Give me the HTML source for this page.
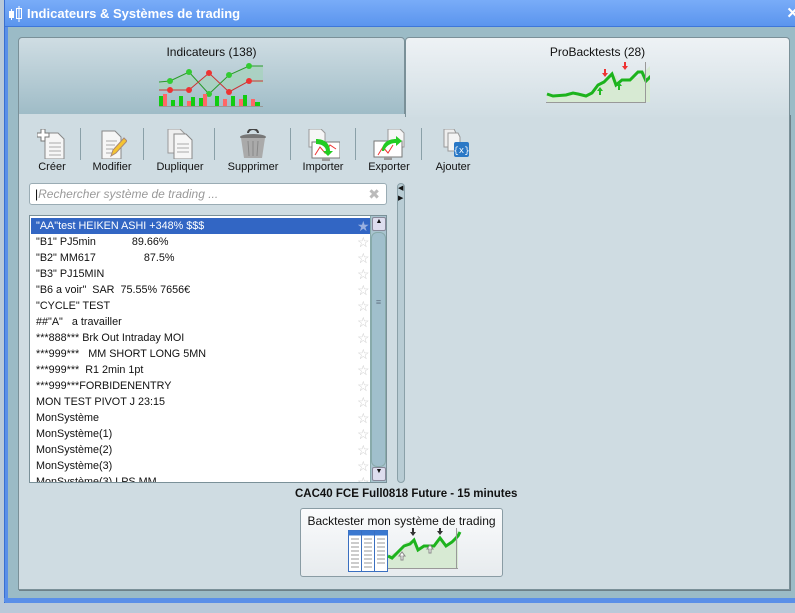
<!DOCTYPE html>
<html><head><meta charset="utf-8"><style>
*{margin:0;padding:0;box-sizing:border-box}
body{width:795px;height:613px;background:#b9c9d9;font-family:"Liberation Sans",sans-serif;position:relative;overflow:hidden;font-size:12px;color:#111}
.abs{position:absolute}
#win{left:4px;top:0;width:795px;height:603px;background:#5a8fe8;border-left:1px solid #3a6fd0}
#title{left:5px;top:0;width:790px;height:27px;background:linear-gradient(#79acf8,#5b95ee);border-bottom:1px solid #3f77d8}
#title span{position:absolute;left:22px;top:6px;color:#fff;font-weight:bold;font-size:13px}
#content{left:8px;top:27px;width:787px;height:571px;background:#9bbbc6}
#bline{left:4px;top:598px;width:791px;height:4px;background:#5a8fe8}
.tab{top:37px;height:78px;border:1px solid #7a9098;border-radius:4px 4px 0 0;text-align:center}
.tab .t{margin-top:7px;font-size:12px}
#panel{left:18px;top:114px;width:772px;height:476px;background:#cfdce2;border:1px solid #7a9098;border-top:none;box-shadow:1px 1px 0 #6d8088}
.tb{top:129px;text-align:center;font-size:11px;width:66px}
.tb .l{position:absolute;top:32px;width:100%;left:0}
.sep{top:128px;width:1px;height:32px;background:#8aa0a8}
#search{left:29px;top:183px;width:358px;height:22px;background:#fff;border:1px solid #9aacb4;border-radius:3px;color:#999;font-style:italic;padding:3px 0 0 5px;font-size:12px}
#list{left:29px;top:215px;width:358px;height:268px;background:#fff;border:1px solid #7a9098;overflow:hidden}
.r{position:absolute;left:1px;width:340px;height:16px;padding:2px 0 0 5px;white-space:pre;font-size:10.8px}
.st{position:absolute;left:326px;top:1px;color:#ccc;font-size:14px;line-height:14px}
#sb{left:370px;top:216px;width:16px;height:266px;background:#a9c4cf;border-left:1px solid #8aa}
</style></head><body>
<div id="win" class="abs"></div>
<div id="title" class="abs">
<svg class="abs" style="left:3px;top:6px" width="16" height="16"><rect x="1" y="5" width="5" height="7" fill="#fff"/><line x1="3.5" y1="3" x2="3.5" y2="14" stroke="#fff"/><rect x="8.5" y="2.5" width="5" height="10" fill="none" stroke="#fff"/><line x1="11" y1="0" x2="11" y2="16" stroke="#fff"/></svg>
<span>Indicateurs &amp; Systèmes de trading</span>
<div class="abs" style="right:-4px;top:4px;color:#fff;font-weight:bold;font-size:15px">✕</div></div>
<div id="content" class="abs"></div>
<div id="bline" class="abs"></div>
<div class="tab abs" style="left:18px;width:387px;background:linear-gradient(#cfdde3,#9fbcc7)"><div class="t">Indicateurs (138)</div>
<svg class="abs" style="left:140px;top:25px" width="105" height="45"><polygon points="0,44 0,19 11,18 30,9 50,31 70,12 90,3 104,3 104,21 90,18 70,29 50,10 30,27 11,27 0,27" fill="#a8d2be" opacity=".8"/><polyline points="0,19 11,18 30,9 50,31 70,12 90,3 104,3" fill="none" stroke="#2a9a2a"/><polyline points="0,27 11,27 30,27 50,10 70,29 90,18 104,18" fill="none" stroke="#c33"/><g fill="#3c3"><circle cx="11" cy="18" r="3"/><circle cx="30" cy="9" r="3"/><circle cx="50" cy="31" r="3"/><circle cx="70" cy="12" r="3"/><circle cx="90" cy="3" r="3"/></g><g fill="#e33"><circle cx="11" cy="27" r="3"/><circle cx="30" cy="27" r="3"/><circle cx="50" cy="10" r="3"/><circle cx="70" cy="29" r="3"/><circle cx="90" cy="18" r="3"/></g><g fill="#1c1"><rect x="0" y="33" width="4" height="10"/><rect x="12" y="37" width="4" height="6"/><rect x="20" y="33" width="4" height="10"/><rect x="32" y="34" width="4" height="9"/><rect x="40" y="35" width="4" height="8"/><rect x="56" y="33" width="4" height="10"/><rect x="72" y="33" width="4" height="10"/><rect x="84" y="32" width="4" height="11"/><rect x="96" y="39" width="5" height="4"/></g><g fill="#f66"><rect x="4" y="31" width="4" height="12"/><rect x="28" y="38" width="4" height="5"/><rect x="44" y="31" width="4" height="12"/><rect x="64" y="36" width="4" height="7"/><rect x="80" y="36" width="4" height="7"/><rect x="92" y="36" width="4" height="7"/></g><line x1="0" y1="43.5" x2="104" y2="43.5" stroke="#999"/></svg></div>
<div class="tab abs" style="left:405px;width:385px;height:80px;background:linear-gradient(#eef2f5,#d0dde3);border-bottom:none;z-index:2"><div class="t">ProBacktests (28)</div>
<svg class="abs" style="left:140px;top:24px" width="104" height="45"><polygon points="1,32 7,34 20,33 32,32 40,34 46,31 56,20 62,18 70,13 74,23 82,16 92,16 100,8 104,4 104,40 1,40" fill="#d7ead3"/><polyline points="1,32 7,34 20,33 27,31 32,32 40,34 46,31 52,23 58,20 66,12 70,23 76,18 84,18 92,10 96,10 100,19 104,15 110,18" fill="none" stroke="#1db31d" stroke-width="3"/><path d="M58 7v4h-2l3 4 3-4h-2v-4z" fill="#e33"/><path d="M78 0v4h-2l3 4 3-4h-2v-4z" fill="#e33"/><path d="M53 33v-4h-2l3-4 3 4h-2v4z" fill="#2b2"/><path d="M72 28v-4h-2l3-4 3 4h-2v4z" fill="#2b2"/><line x1="99.5" y1="0" x2="99.5" y2="40" stroke="#999"/><line x1="0" y1="40.5" x2="100" y2="40.5" stroke="#999"/></svg></div>
<div id="panel" class="abs"></div>
<!-- toolbar -->
<div class="tb abs" style="left:19px"><svg width="30" height="30"><path d="M8 4h13l6 6v20H8z" fill="#f6f6f6" stroke="#888"/><g stroke="#aaa"><line x1="12" y1="14" x2="24" y2="14"/><line x1="12" y1="18" x2="24" y2="18"/><line x1="12" y1="22" x2="24" y2="22"/><line x1="12" y1="26" x2="24" y2="26"/></g><path d="M4 0h4v4h4v4h-4v4h-4v-4h-4v-4h4z" fill="#fff" stroke="#777"/></svg><div class="l">Créer</div></div>
<div class="tb abs" style="left:79px"><svg width="30" height="30"><path d="M5 2h13l6 6v22H5z" fill="#f6f6f6" stroke="#888"/><g stroke="#aaa"><line x1="9" y1="12" x2="20" y2="12"/><line x1="9" y1="16" x2="18" y2="16"/><line x1="9" y1="20" x2="16" y2="20"/><line x1="9" y1="24" x2="15" y2="24"/></g><path d="M14 27l2-6 11-12 3 3-11 12z" fill="#f5c431" stroke="#a87"/></svg><div class="l">Modifier</div></div>
<div class="tb abs" style="left:147px"><svg width="30" height="30"><path d="M3 0h12l5 5v19H3z" fill="#eee" stroke="#999"/><path d="M9 5h12l6 6v19H9z" fill="#f6f6f6" stroke="#888"/><g stroke="#aaa"><line x1="12" y1="15" x2="24" y2="15"/><line x1="12" y1="19" x2="24" y2="19"/><line x1="12" y1="23" x2="24" y2="23"/></g></svg><div class="l">Dupliquer</div></div>
<div class="tb abs" style="left:220px"><svg width="30" height="30"><path d="M10 4a5 4 0 0 1 10 0" fill="none" stroke="#444" stroke-width="2"/><ellipse cx="15" cy="8" rx="13" ry="3" fill="#777"/><path d="M3 9l3 20h18l3-20z" fill="#aaa"/><g stroke="#888"><line x1="10" y1="12" x2="11" y2="27"/><line x1="15" y1="12" x2="15" y2="27"/><line x1="20" y1="12" x2="19" y2="27"/></g></svg><div class="l">Supprimer</div></div>
<div class="tb abs" style="left:290px"><svg width="34" height="32"><path d="M3 0h12l4 4v14H3z" fill="#f6f6f6" stroke="#999"/><rect x="6" y="13" width="28" height="16" fill="#fff" stroke="#777"/><rect x="16" y="29" width="8" height="3" fill="#999"/><polyline points="9,26 14,18 19,24 24,16 30,20" fill="none" stroke="#e33"/><path d="M10 10c8 0 14 4 14 12h3l-5 5-5-5h3c0-4-4-7-10-7z" fill="#2c2"/></svg><div class="l">Importer</div></div>
<div class="tb abs" style="left:356px"><svg width="34" height="32"><path d="M16 0h12l4 4v14H16z" fill="#f6f6f6" stroke="#999"/><rect x="2" y="12" width="28" height="16" fill="#fff" stroke="#777"/><rect x="12" y="28" width="8" height="3" fill="#999"/><polyline points="6,26 11,18 16,24 21,16" fill="none" stroke="#e33"/><path d="M10 22c0-8 6-12 14-12v-3l6 5-6 5v-3c-6 0-10 3-12 8z" fill="#2c2"/></svg><div class="l">Exporter</div></div>
<div class="tb abs" style="left:420px"><svg width="34" height="32"><path d="M18 0h-10v18h12V4z" fill="#eee" stroke="#999"/><path d="M22 4h-10v18h12V8z" fill="#f4f4f4" stroke="#999"/><rect x="18" y="13" width="15" height="15" rx="2" fill="#2a78c6"/><text x="25.5" y="24" font-size="9" fill="#fff" text-anchor="middle" font-family="Liberation Mono">{x}</text></svg><div class="l">Ajouter</div></div>
<div class="sep abs" style="left:80px"></div><div class="sep abs" style="left:143px"></div><div class="sep abs" style="left:214px"></div><div class="sep abs" style="left:290px"></div><div class="sep abs" style="left:355px"></div><div class="sep abs" style="left:421px"></div>
<div id="search" class="abs"><span style="color:#000;font-style:normal">|</span>Rechercher système de trading ...<span class="abs" style="right:6px;top:2px;color:#bbb;font-style:normal;font-size:14px">✖</span></div>
<div class="abs" style="left:397px;top:183px;width:8px;height:300px;background:#b8ccd4;border:1px solid #8aa0a8;border-radius:4px"><div style="font-size:7px;line-height:10px;margin-left:0px">◀<br>▶</div></div>
<div id="list" class="abs">
<div class="r" style="top:2px;background:#3266c4;color:#fff;width:340px">"AA"test HEIKEN ASHI +348% $$$<span class="st" style="color:#9ab0e0">★</span></div>
<div class="r" style="top:18px">"B1" PJ5min            89.66%<span class="st">☆</span></div>
<div class="r" style="top:34px">"B2" MM617                87.5%<span class="st">☆</span></div>
<div class="r" style="top:50px">"B3" PJ15MIN<span class="st">☆</span></div>
<div class="r" style="top:66px">"B6 a voir"  SAR  75.55% 7656€<span class="st">☆</span></div>
<div class="r" style="top:82px">"CYCLE" TEST<span class="st">☆</span></div>
<div class="r" style="top:98px">##"A"   a travailler<span class="st">☆</span></div>
<div class="r" style="top:114px">***888*** Brk Out Intraday MOI<span class="st">☆</span></div>
<div class="r" style="top:130px">***999***   MM SHORT LONG 5MN<span class="st">☆</span></div>
<div class="r" style="top:146px">***999***  R1 2min 1pt<span class="st">☆</span></div>
<div class="r" style="top:162px">***999***FORBIDENENTRY<span class="st">☆</span></div>
<div class="r" style="top:178px">MON TEST PIVOT J 23:15<span class="st">☆</span></div>
<div class="r" style="top:194px">MonSystème<span class="st">☆</span></div>
<div class="r" style="top:210px">MonSystème(1)<span class="st">☆</span></div>
<div class="r" style="top:226px">MonSystème(2)<span class="st">☆</span></div>
<div class="r" style="top:242px">MonSystème(3)<span class="st">☆</span></div>
<div class="r" style="top:258px">MonSystème(3) LPS MM<span class="st">☆</span></div>
</div>
<div id="sb" class="abs"><div class="abs" style="left:1px;top:1px;width:14px;height:14px;background:#dde;border:1px solid #889;border-radius:2px;font-size:7px;text-align:center">▲</div><div class="abs" style="left:0;top:16px;width:15px;height:235px;background:#a0bfcc;border:1px solid #8aa;border-radius:6px;text-align:center;color:#678;font-size:9px;padding-top:64px">≡</div><div class="abs" style="left:1px;top:251px;width:14px;height:14px;background:#dde;border:1px solid #889;border-radius:2px;font-size:7px;text-align:center">▼</div></div>
<div class="abs" style="left:295px;top:488px;font-weight:bold;font-size:11.5px">CAC40 FCE Full0818 Future - 15 minutes</div>
<div class="abs" style="left:300px;top:508px;width:203px;height:69px;background:linear-gradient(#fafbfc,#e7ebee);border:1px solid #8a9ca4;border-radius:3px;text-align:center"><div style="margin-top:5px;font-size:12px">Backtester mon système de trading</div>
<svg class="abs" style="left:47px;top:19px" width="115" height="46"><rect x="0.5" y="2.5" width="39" height="41" fill="#fff" stroke="#3a6fc0"/><rect x="0.5" y="2.5" width="39" height="5" fill="#3a78d0"/><line x1="13.5" y1="3" x2="13.5" y2="43" stroke="#3a6fc0"/><line x1="26.5" y1="3" x2="26.5" y2="43" stroke="#3a6fc0"/><g stroke="#999"><line x1="3" y1="11" x2="11" y2="11"/><line x1="3" y1="15" x2="11" y2="15"/><line x1="3" y1="19" x2="11" y2="19"/><line x1="3" y1="23" x2="11" y2="23"/><line x1="3" y1="27" x2="11" y2="27"/><line x1="3" y1="31" x2="11" y2="31"/><line x1="3" y1="35" x2="11" y2="35"/><line x1="3" y1="39" x2="11" y2="39"/><line x1="16" y1="11" x2="24" y2="11"/><line x1="16" y1="15" x2="24" y2="15"/><line x1="16" y1="19" x2="24" y2="19"/><line x1="16" y1="23" x2="24" y2="23"/><line x1="16" y1="27" x2="24" y2="27"/><line x1="16" y1="31" x2="24" y2="31"/><line x1="16" y1="35" x2="24" y2="35"/><line x1="16" y1="39" x2="24" y2="39"/><line x1="29" y1="11" x2="37" y2="11"/><line x1="29" y1="15" x2="37" y2="15"/><line x1="29" y1="19" x2="37" y2="19"/><line x1="29" y1="23" x2="37" y2="23"/><line x1="29" y1="27" x2="37" y2="27"/><line x1="29" y1="31" x2="37" y2="31"/><line x1="29" y1="35" x2="37" y2="35"/></g><polygon points="40,28 48,24 58,14 66,12 70,22 76,18 86,18 92,10 98,18 104,14 110,2 110,40 40,40" fill="#d7ead3"/><polyline points="40,28 44,30 50,24 56,18 62,16 66,12 70,22 76,18 86,18 92,10 98,18 104,14 110,8 112,4" fill="none" stroke="#1db31d" stroke-width="3"/><path d="M64 0v4h-2l3 4 3-4h-2v-4z" fill="#333"/><path d="M91 -1v4h-2l3 4 3-4h-2v-4z" fill="#333"/><path d="M53 32v-4h-2l3-4 3 4h-2v4z" fill="#fff" stroke="#888"/><path d="M81 25v-4h-2l3-4 3 4h-2v4z" fill="#fff" stroke="#888"/><line x1="108.5" y1="0" x2="108.5" y2="40" stroke="#999"/><line x1="40" y1="40.5" x2="110" y2="40.5" stroke="#999"/></svg></div>
</body></html>
